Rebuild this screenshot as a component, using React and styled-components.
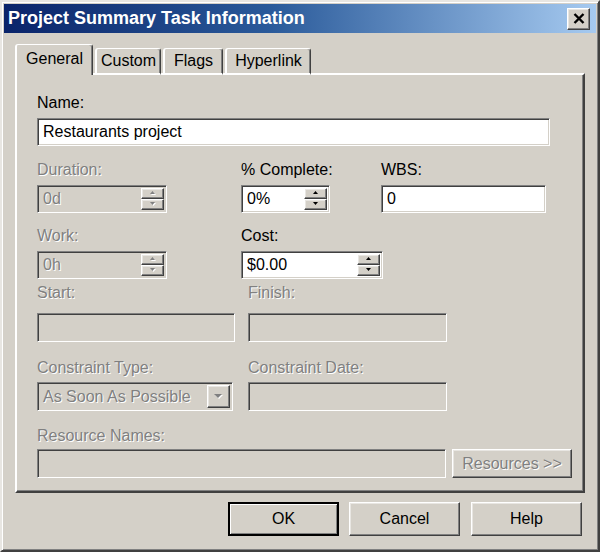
import React from 'react';
import styled, { createGlobalStyle, css } from 'styled-components';

const GlobalStyle = createGlobalStyle`
  html, body {
    margin: 0;
    padding: 0;
    background: #d4d0c8;
  }
  * {
    box-sizing: border-box;
  }
`;

const raised = css`
  border: 1px solid;
  border-color: #ffffff #404040 #404040 #ffffff;
  box-shadow: inset -1px -1px 0 #808080, inset 1px 1px 0 #e8e6e2;
`;

const sunken = css`
  border: 1px solid;
  border-color: #808080 #ffffff #ffffff #808080;
  box-shadow: inset 1px 1px 0 #404040, inset -1px -1px 0 #d4d0c8;
`;

const disabledText = css`
  color: #808080;
  text-shadow: 1px 1px 0 #ffffff;
`;

const Window = styled.div`
  width: 600px;
  height: 552px;
  display: flex;
  flex-direction: column;
  padding: 2px;
  background: #d4d0c8;
  border: 2px solid;
  border-color: #e8e6e2 #404040 #404040 #e8e6e2;
  box-shadow: inset 1px 1px 0 #ffffff, inset -1px -1px 0 #808080;
  font-family: 'Liberation Sans', Arial, sans-serif;
  font-size: 16px;
  color: #000;
`;

const TitleBar = styled.div`
  height: 29px;
  display: flex;
  align-items: center;
  justify-content: space-between;
  padding: 0 6px 0 4px;
  background: linear-gradient(to right, #0a246a 0%, #2a5a9a 45%, #a6caf0 100%);
  color: #ffffff;
  font-weight: bold;
  font-size: 18px;
`;

const CloseButton = styled.div`
  ${raised};
  width: 23px;
  height: 22px;
  background: #d4d0c8;
  display: flex;
  align-items: center;
  justify-content: center;
`;

const Body = styled.div`
  padding: 11px 11px 0;
  display: flex;
  flex-direction: column;
`;

const TabList = styled.div`
  display: flex;
  align-items: flex-end;
  height: 31px;
  position: relative;
  z-index: 1;
  margin-bottom: -2px;
`;

const Tab = styled.div`
  width: ${(p) => p.$w}px;
  height: ${(p) => (p.$active ? 31 : 27)}px;
  margin-right: 2px;
  display: flex;
  align-items: center;
  justify-content: center;
  padding-bottom: ${(p) => (p.$active ? 3 : 1)}px;
  background: #d4d0c8;
  border-top: 1px solid #ffffff;
  border-left: 2px solid #ffffff;
  border-right: 1px solid #404040;
  border-radius: 3px 3px 0 0;
  box-shadow: inset -1px 0 0 #808080;
  ${(p) =>
    !p.$active &&
    css`
      border-bottom: 2px solid #ffffff;
    `}
`;

const Panel = styled.div`
  height: 420px;
  padding: 19px 8px 19px 20px;
  border: 2px solid;
  border-color: #ffffff #404040 #404040 #ffffff;
  box-shadow: inset -1px -1px 0 #808080;
  display: flex;
  flex-direction: column;
`;

const Row = styled.div`
  display: flex;
  align-items: flex-end;
  margin-top: ${(p) => p.$mt || 0}px;
`;

const Field = styled.div`
  display: flex;
  flex-direction: column;
  flex-shrink: 0;
  width: ${(p) => p.$w}px;
  margin-left: ${(p) => p.$ml || 0}px;
`;

const Label = styled.div`
  height: 18px;
  line-height: 18px;
  white-space: nowrap;
  ${(p) => p.$disabled && disabledText};
`;

const Box = styled.div`
  ${sunken};
  height: ${(p) => p.$h || 28}px;
  margin-top: ${(p) => p.$gap}px;
  padding: 2px 2px 2px 5px;
  display: flex;
  align-items: center;
  background: ${(p) => (p.$disabled ? '#d4d0c8' : '#ffffff')};
  ${(p) => p.$disabled && disabledText};
`;

const Value = styled.span`
  flex: 1;
  white-space: nowrap;
`;

const Spin = styled.div`
  width: 23px;
  height: 100%;
  display: flex;
  flex-direction: column;
`;

const SpinButton = styled.div`
  ${raised};
  flex: 1;
  background: #d4d0c8;
  display: flex;
  align-items: center;
  justify-content: center;
`;

const DropButton = styled.div`
  ${raised};
  width: 23px;
  height: 100%;
  background: #d4d0c8;
  display: flex;
  align-items: center;
  justify-content: center;
`;

const Button = styled.div`
  ${raised};
  flex-shrink: 0;
  width: ${(p) => p.$w}px;
  height: ${(p) => p.$h}px;
  margin-left: ${(p) => p.$ml || 0}px;
  background: #d4d0c8;
  display: flex;
  align-items: center;
  justify-content: center;
  ${(p) => p.$disabled && disabledText};
  ${(p) =>
    p.$default &&
    css`
      border: 2px solid #000;
      box-shadow: inset 1px 1px 0 #ffffff, inset -1px -1px 0 #808080;
    `}
`;

const ButtonBar = styled.div`
  display: flex;
  justify-content: flex-end;
  margin-top: 9px;
  padding-right: 3px;
`;

function Arrow({ up, disabled, size = 7 }) {
  const h = Math.ceil(size / 2) + 1;
  const pts = up
    ? `0,${h - 1} ${size / 2},0 ${size},${h - 1}`
    : `0,0 ${size / 2},${h - 1} ${size},0`;
  return (
    <svg width={size + 1} height={h + 1} viewBox={`0 0 ${size + 1} ${h + 1}`}>
      {disabled && <polygon points={pts} fill="#ffffff" transform="translate(1,1)" />}
      <polygon points={pts} fill={disabled ? '#808080' : '#000000'} />
    </svg>
  );
}

function Spinner({ disabled }) {
  return (
    <Spin>
      <SpinButton>
        <Arrow up disabled={disabled} size={5} />
      </SpinButton>
      <SpinButton>
        <Arrow disabled={disabled} size={5} />
      </SpinButton>
    </Spin>
  );
}

export default function App() {
  return (
    <>
      <GlobalStyle />
      <Window>
        <TitleBar>
          <span>Project Summary Task Information</span>
          <CloseButton>
            <svg width="12" height="11" viewBox="0 0 12 11">
              <path d="M1.5 1 L10.5 10 M10.5 1 L1.5 10" stroke="#000" strokeWidth="2.4" />
            </svg>
          </CloseButton>
        </TitleBar>

        <Body>
          <TabList>
            <Tab $w={78} $active>General</Tab>
            <Tab $w={66}>Custom</Tab>
            <Tab $w={60}>Flags</Tab>
            <Tab $w={86}>Hyperlink</Tab>
          </TabList>

          <Panel>
            <Field $w={513}>
              <Label>Name:</Label>
              <Box $gap={6}>
                <Value>Restaurants project</Value>
              </Box>
            </Field>

            <Row $mt={15}>
              <Field $w={130}>
                <Label $disabled>Duration:</Label>
                <Box $gap={6} $disabled>
                  <Value>0d</Value>
                  <Spinner disabled />
                </Box>
              </Field>
              <Field $w={89} $ml={74}>
                <Label>% Complete:</Label>
                <Box $gap={6}>
                  <Value>0%</Value>
                  <Spinner />
                </Box>
              </Field>
              <Field $w={165} $ml={51}>
                <Label>WBS:</Label>
                <Box $gap={6}>
                  <Value>0</Value>
                </Box>
              </Field>
            </Row>

            <Row $mt={14}>
              <Field $w={130}>
                <Label $disabled>Work:</Label>
                <Box $gap={6} $disabled>
                  <Value>0h</Value>
                  <Spinner disabled />
                </Box>
              </Field>
              <Field $w={142} $ml={74}>
                <Label>Cost:</Label>
                <Box $gap={6}>
                  <Value>$0.00</Value>
                  <Spinner />
                </Box>
              </Field>
            </Row>

            <Row $mt={5}>
              <Field $w={198}>
                <Label $disabled>Start:</Label>
                <Box $gap={11} $h={29} $disabled />
              </Field>
              <Field $w={199} $ml={13}>
                <Label $disabled>Finish:</Label>
                <Box $gap={11} $h={29} $disabled />
              </Field>
            </Row>

            <Row $mt={17}>
              <Field $w={196}>
                <Label $disabled>Constraint Type:</Label>
                <Box $gap={5} $h={29} $disabled>
                  <Value>As Soon As Possible</Value>
                  <DropButton>
                    <Arrow disabled size={8} />
                  </DropButton>
                </Box>
              </Field>
              <Field $w={199} $ml={15}>
                <Label $disabled>Constraint Date:</Label>
                <Box $gap={5} $h={29} $disabled />
              </Field>
            </Row>

            <Row $mt={16}>
              <Field $w={409}>
                <Label $disabled>Resource Names:</Label>
                <Box $gap={4} $h={29} $disabled />
              </Field>
              <Button $w={120} $h={29} $ml={6} $disabled>
                Resources &gt;&gt;
              </Button>
            </Row>
          </Panel>

          <ButtonBar>
            <Button $w={111} $h={34} $default>OK</Button>
            <Button $w={111} $h={34} $ml={10}>Cancel</Button>
            <Button $w={111} $h={34} $ml={11}>Help</Button>
          </ButtonBar>
        </Body>
      </Window>
    </>
  );
}
